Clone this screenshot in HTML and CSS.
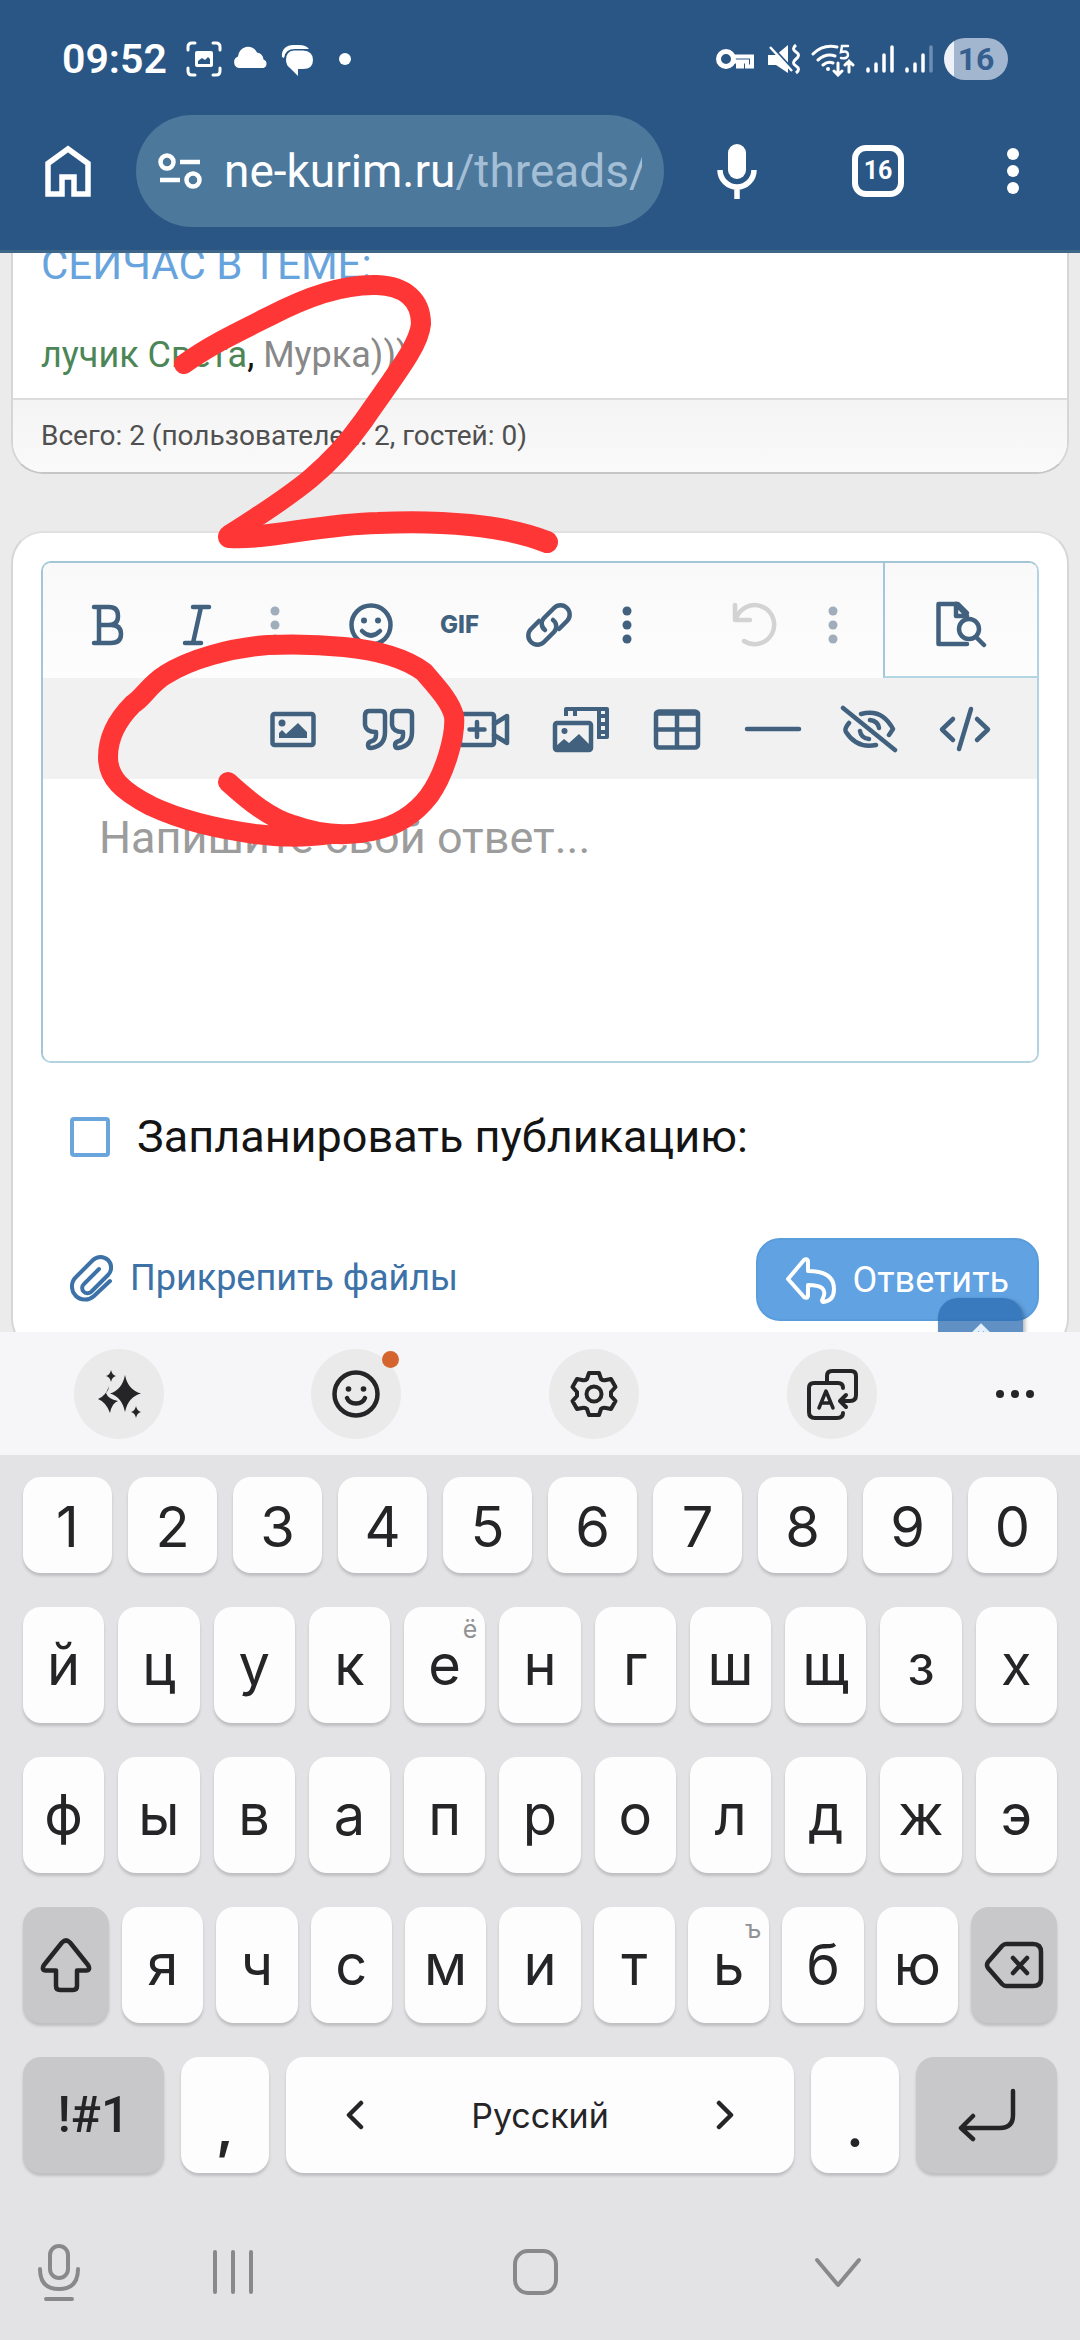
FILE: index.html
```html
<!DOCTYPE html>
<html lang="ru">
<head>
<meta charset="utf-8">
<meta name="viewport" content="width=device-width, initial-scale=1">
<title>ne-kurim.ru</title>
<link rel="stylesheet" href="styles.css">
</head>
<body>
<div class="screen">
  <header class="browser">
    <div class="status">
      <div class="status-left">
        <time class="clock">09:52</time>
        <svg width="36" height="36" viewBox="0 0 36 36" fill="none" stroke="#fff" stroke-width="3" stroke-linecap="round"><path d="M2 9V6q0-4 4-4h3M27 2h3q4 0 4 4v3M34 27v3q0 4-4 4h-3M9 34H6q-4 0-4-4v-3"/><rect x="9" y="10" width="18" height="16" rx="2" fill="#fff" stroke="none"/><path d="M12 23v-3l4-3 3 2 3-3 2 2v5z" fill="#295685" stroke="none"/></svg>
        <svg width="36" height="36" viewBox="0 0 36 36" fill="#fff"><path d="M6 27a6 6 0 0 1-1-11.500a10 10 0 0 1 19-4a8 8 0 0 1 6.500 7a4.500 4.500 0 0 1 0 8.500z"/></svg>
        <svg width="36" height="36" viewBox="0 0 36 36" fill="#fff"><path d="M2 16C1 8 7 4 13 4h6q7 0 10 4H15Q5 8 4 17z"/><path d="M14 9.500h9q10 .5 10 9.500t-10 9h-5v7l-8-8q-4-3-4-8 0-9 8-9.500z"/></svg>
        <svg width="36" height="36" viewBox="0 0 36 36" fill="#fff"><circle cx="18" cy="18" r="6"/></svg>
      </div>
      <div class="status-right">
        <svg width="41" height="36" viewBox="0 0 41 36" fill="none" stroke="#fff"><circle cx="10" cy="18" r="7.500" stroke-width="5"/><path d="M18 15.500h18v10h-5v-5h-5v5h-4v-5h-4" stroke-width="4"/></svg>
        <svg width="32" height="36" viewBox="0 0 32 36"><path d="M0 14h8l12-10v28L8 24H0z" fill="#fff"/><path d="M0 2l24 26" stroke="#295685" stroke-width="3"/><path d="M2 6l22 24" stroke="#fff" stroke-width="2.500"/><path d="M28 4q-5 4 0 7t0 7 0 7 0 7" fill="none" stroke="#fff" stroke-width="3"/></svg>
        <svg width="44" height="36" viewBox="0 0 44 36" fill="none" stroke="#fff" stroke-width="3" stroke-linecap="round"><path d="M2 13Q12 3 26 6M7 19q8-7 17-4M12 24q5-4 10-2"/><circle cx="17" cy="28" r="2" fill="#fff" stroke="none"/><path d="M37 5h-6l-1 6q7-2 7 3 0 4-7 3" stroke-width="2.500"/><path d="M27 22v11M23 30l4 4 4-4M38 31V20M34 24l4-4 4 4" stroke-width="3"/></svg>
        <svg width="28" height="36" viewBox="0 0 28 36" stroke="#fff" stroke-width="3.500" stroke-linecap="round"><path d="M2 28v2M10 23v7M18 14v16M26 6v24"/></svg>
        <svg width="28" height="36" viewBox="0 0 28 36" stroke="#fff" stroke-width="3.500" stroke-linecap="round"><path d="M2 28v2M10 23v7M18 14v16"/><path d="M26 6v24" stroke="#6d8fb3"/></svg>
        <span class="battery">16</span>
      </div>
    </div>
    <div class="toolbar">
      <button class="tool home" aria-label="Домой"><svg width="46" height="52" viewBox="0 0 46 52" fill="none" stroke="#fff" stroke-width="5.500"><path d="M3 49V18.500L23 4l20 14.500V49H29V32H17v17z"/></svg></button>
      <button class="omnibox"><svg width="44" height="36" viewBox="0 0 44 36" fill="none" stroke="#fff" stroke-width="4.500"><circle cx="9" cy="9" r="6.500"/><path d="M22 9h20M2 27h20"/><circle cx="35" cy="27" r="6.500"/></svg><span class="url">ne-kurim.ru<span class="path">/threads/</span></span></button>
      <button class="tool mic" aria-label="Голосовой поиск"><svg width="40" height="56" viewBox="0 0 40 56"><rect x="11" y="1" width="18" height="35" rx="9" fill="#fff"/><path d="M3 27a17 17 0 0 0 34 0M20 44v12" fill="none" stroke="#fff" stroke-width="5.500"/></svg></button>
      <button class="tool tabs" aria-label="Вкладки"><span>16</span></button>
      <button class="tool menu" aria-label="Меню"><svg width="12" height="48" viewBox="0 0 12 48" fill="#fff"><circle cx="6" cy="7" r="6"/><circle cx="6" cy="24" r="6"/><circle cx="6" cy="41" r="6"/></svg></button>
    </div>
  </header>

  <main class="page">
    <section class="card online">
      <h2>СЕЙЧАС В ТЕМЕ:</h2>
      <p class="names"><a class="green" href="#">лучик Света</a>, <a class="gray" href="#">Мурка)))</a></p>
      <p class="total">Всего: 2 (пользователей: 2, гостей: 0)</p>
    </section>

    <form class="card reply">
      <div class="editor">
        <div class="row-main">
          <div class="tools">
            <div class="group">
              <button type="button" class="ed" aria-label="Жирный"><svg width="48" height="48" viewBox="0 0 48 48"><path d="M10 6h15q9 0 9 9t-9 9H15M10 42h17q10 0 10-9t-10-9M15 6v36" /></svg></button>
              <button type="button" class="ed" aria-label="Курсив"><svg width="48" height="48" viewBox="0 0 48 48"><path d="M20 6h16M12 42h16M28 6l-8 36"/></svg></button>
              <button type="button" class="dots pale" aria-label="Ещё"><svg width="12" height="48" viewBox="0 0 12 48"><circle cx="6" cy="10" r="4.500"/><circle cx="6" cy="24" r="4.500"/><circle cx="6" cy="38" r="4.500"/></svg></button>
            </div>
            <div class="group">
              <button type="button" class="ed" aria-label="Смайлы"><svg width="48" height="48" viewBox="0 0 48 48"><circle cx="24" cy="24" r="19.500"/><circle cx="17" cy="19.500" r="3" class="fill"/><circle cx="31" cy="19.500" r="3" class="fill"/><path d="M15 30q9 9 18 0"/></svg></button>
              <button type="button" class="ed gif">GIF</button>
              <button type="button" class="ed" aria-label="Ссылка"><svg width="48" height="48" viewBox="0 0 48 48"><path d="M20 29a8 8 0 0 1-1-12l10-10a9 9 0 0 1 13 13l-8 8"/><path d="M28 19a8 8 0 0 1 1 12L19 41A9 9 0 0 1 6 28l8-8"/></svg></button>
              <button type="button" class="dots" aria-label="Ещё"><svg width="12" height="48" viewBox="0 0 12 48"><circle cx="6" cy="10" r="4.500"/><circle cx="6" cy="24" r="4.500"/><circle cx="6" cy="38" r="4.500"/></svg></button>
            </div>
            <div class="group undo-group">
              <button type="button" class="ed off" aria-label="Отменить"><svg width="48" height="48" viewBox="0 0 48 48"><path d="M4 4v15h15M5 18A19.500 19.500 0 1 1 13 40"/></svg></button>
              <button type="button" class="dots pale" aria-label="Ещё"><svg width="12" height="48" viewBox="0 0 12 48"><circle cx="6" cy="10" r="4.500"/><circle cx="6" cy="24" r="4.500"/><circle cx="6" cy="38" r="4.500"/></svg></button>
            </div>
          </div>
          <button type="button" class="preview" aria-label="Предпросмотр"><svg width="56" height="48" viewBox="0 0 56 48"><path d="M34 44H5.500V4H25l9 9"/><path d="M23 4v12h11z"/><circle cx="36" cy="29" r="10"/><path d="M43 37l8 8"/></svg></button>
        </div>
        <div class="row-more">
          <button type="button" class="ed2" aria-label="Изображение"><svg width="56" height="48" viewBox="0 0 56 48"><rect x="7.500" y="9" width="41" height="31" rx="2"/><circle cx="17" cy="18" r="3.500" class="fill"/><path class="fill" d="M14 33v-5l3-3 4 4 12-11 9 9v6z"/></svg></button>
          <button type="button" class="ed2" aria-label="Цитата"><svg width="56" height="48" viewBox="0 0 56 48"><path d="M8 6h12q4 0 4 4v17q0 14-14 16-3 0-3-3t4-4q4-1 4-6v-3q-10 0-11-7v-9q0-5 4-5z"/><path d="M35 6h12q4 0 4 4v17q0 14-14 16-3 0-3-3t4-4q4-1 4-6v-3q-10 0-11-7v-9q0-5 4-5z"/></svg></button>
          <button type="button" class="ed2" aria-label="Видео"><svg width="56" height="48" viewBox="0 0 56 48"><rect x="3" y="9" width="34" height="31" rx="2"/><path d="M37 19l13-8v27l-13-8M20 17v15M12.500 24.500h15"/></svg></button>
          <button type="button" class="ed2" aria-label="Медиа"><svg width="58" height="48" viewBox="0 0 58 48"><path class="fill" d="M12 11V4q0-2 2-2h41q2 0 2 2v28q0 2-2 2H45V6H25v5h-4V6h-5v5zM49 6v3h4V6zm0 7v4h4v-4zm0 8v4h4v-4zm0 8v2h4v-2z" fill-rule="evenodd"/><rect x="3" y="18" width="36" height="27" rx="2"/><circle cx="12.500" cy="26" r="3" class="fill"/><path class="fill" d="M3 42l9-8 5 4 10-9 12 12v4H3z"/></svg></button>
          <button type="button" class="ed2" aria-label="Таблица"><svg width="56" height="48" viewBox="0 0 56 48"><rect x="7" y="6.500" width="42" height="36" rx="3"/><path d="M7 8.500h42M7 24.500h42M28 8v34"/></svg></button>
          <button type="button" class="ed2" aria-label="Линия"><svg width="58" height="48" viewBox="0 0 58 48"><path d="M3 24h52"/></svg></button>
          <button type="button" class="ed2" aria-label="Скрытый текст"><svg width="58" height="48" viewBox="0 0 58 48"><path d="M3 3l52 42M21 9q21-6 32 15l-4 6M9 18q-5 6-3 9 11 17 30 13M30 15q8 1 9 8M20 26q1 7 9 8"/></svg></button>
          <button type="button" class="ed2" aria-label="Код"><svg width="56" height="48" viewBox="0 0 56 48"><path d="M16 14L5 24.500 16 35M40 14l11 10.500L40 35M34 4L22 44"/></svg></button>
        </div>
        <textarea aria-label="Ответ" placeholder="Напишите свой ответ..."></textarea>
      </div>
      <label class="schedule"><input type="checkbox">Запланировать публикацию:</label>
      <div class="actions">
        <a class="attach" href="#"><svg width="44" height="48" viewBox="0 0 44 48" fill="none" stroke="#3c72a8" stroke-width="4" stroke-linecap="round"><path d="M29 15L14 30a5 5 0 0 0 7 8L38 21A10.500 10.500 0 0 0 23 6L6 23a13 13 0 0 0 18 19L40 27"/></svg>Прикрепить файлы</a>
        <button type="button" class="submit"><svg width="50" height="48" viewBox="0 0 50 48" fill="none" stroke="#fff" stroke-width="4" stroke-linejoin="round"><path d="M2 23L18 4q3-2 4 1v10q26 0 26 18 0 12-11 13-2-1 0-4 6-13-15-13v11q-1 3-4 1z"/></svg>Ответить</button>
      </div>
    </form>

    <button class="to-top" aria-label="Наверх"><svg width="30" height="36" viewBox="0 0 30 36" fill="none" stroke="#e3effa" stroke-width="4"><path d="M15 3v33M3 15L15 3l12 12"/></svg></button>

    <svg class="marker" width="600" height="640" viewBox="0 253 600 640" fill="none" stroke="#ff3636" stroke-width="20" stroke-linecap="round" stroke-linejoin="round">
      <path d="M184 364C210 345 240 331 270 316C310 295 345 284 377 285C405 286 421 300 421 324C419 346 395 375 364 420C330 468 300 490 229 535"/>
      <path d="M229 537C265 540 320 524 378 523C440 520 505 525 547 542" stroke-width="22"/>
      <path d="M228 782C250 802 270 818 293 825C320 835 345 837 372 831C398 826 416 813 429 796C445 774 456 735 454 716C450 700 434 684 424 672C405 658 376 650 344 647C315 644 290 644 268 645C230 648 190 659 165 675C150 684 143 698 133 704C117 720 108 738 108 757C108 778 122 791 151 806C185 822 220 829 255 834C280 837 300 838 330 834"/>
    </svg>
  </main>

  <section class="keyboard" aria-label="Клавиатура">
    <div class="kb-tools">
      <button class="round" aria-label="Помощник"><svg width="48" height="52" viewBox="0 0 48 52" fill="#252527"><path d="M30 7q3 15 16 18.500Q33 29 30 44 27 29 15 25.500 27 22 30 7z"/><path d="M14 18q-3 10-11 13 8 3 12 14 2-10 8-12-10-2-12-8 3-3 3-7z"/><path d="M16 2q1 5 5 6-4 1-5 6-1-5-5-6 4-1 5-6zM41 38q1 5 5 6-4 1-5 6-1-5-5-6 4-1 5-6z"/></svg></button>
      <button class="round badge" aria-label="Эмодзи"><svg width="52" height="52" viewBox="0 0 52 52" fill="none" stroke="#252527" stroke-width="4.500" stroke-linecap="round"><circle cx="26" cy="26" r="21.500"/><circle cx="18.500" cy="21" r="2.800" fill="#252527" stroke="none"/><circle cx="33.500" cy="21" r="2.800" fill="#252527" stroke="none"/><path d="M17 30a9.500 8 0 0 0 18 0"/></svg></button>
      <button class="round" aria-label="Настройки"><svg width="52" height="52" viewBox="0 0 52 52" fill="none" stroke="#252527" stroke-width="4" stroke-linejoin="round"><path d="M21 5h10l2 6q2 2 5 1l5-1 4.500 8-4.500 5v4l4.500 5-4.500 8-5-1q-3-1-5 1l-2 6H21l-2-6q-2-2-5-1l-5 1L4.500 33 9 28v-4l-4.500-5L9 11l5 1q3 1 5-1z"/><circle cx="26" cy="26" r="7.500"/></svg></button>
      <button class="round" aria-label="Перевод"><svg width="54" height="54" viewBox="0 0 54 54" fill="none" stroke="#252527" stroke-width="4" stroke-linecap="round" stroke-linejoin="round"><path d="M22 15V9q0-5 5-5h19q5 0 5 5v19q0 6-6 6H36M41 28l-6 6 6 6M38 21q0-5-5-5H9q-5 0-5 5v24q0 6 6 6h22q6 0 6-5"/><path d="M14 41l7-17 7 17M16 36h10" stroke-width="3.500"/></svg></button>
      <button class="more" aria-label="Ещё"><svg width="40" height="12" viewBox="0 0 40 12" fill="#252527"><circle cx="5" cy="6" r="4"/><circle cx="20" cy="6" r="4"/><circle cx="35" cy="6" r="4"/></svg></button>
    </div>
    <div class="keys">
      <div class="krow digits">
        <button>1</button><button>2</button><button>3</button><button>4</button><button>5</button><button>6</button><button>7</button><button>8</button><button>9</button><button>0</button>
      </div>
      <div class="krow">
        <button>й</button><button>ц</button><button>у</button><button>к</button><button>е<small>ё</small></button><button>н</button><button>г</button><button>ш</button><button>щ</button><button>з</button><button>х</button>
      </div>
      <div class="krow">
        <button>ф</button><button>ы</button><button>в</button><button>а</button><button>п</button><button>р</button><button>о</button><button>л</button><button>д</button><button>ж</button><button>э</button>
      </div>
      <div class="krow shift-row">
        <button class="dark" aria-label="Shift"><svg width="52" height="56" viewBox="0 0 52 56"><path d="M22 5.500q4-4 8 0L48 28q3 5-2 5.500h-9V49q0 4-4 4H20q-4 0-4-4V33.500H6q-5-.5-2-5.500z"/></svg></button><button>я</button><button>ч</button><button>с</button><button>м</button><button>и</button><button>т</button><button>ь<small>ъ</small></button><button>б</button><button>ю</button><button class="dark" aria-label="Удалить"><svg width="60" height="50" viewBox="0 0 60 50"><path d="M22 4h27q8 0 8 8v27q0 7-8 7H22q-2 0-4-2L4 28q-2-3 0-6L18 6q2-2 4-2zM29 18l14 15M43 18L29 33"/></svg></button>
      </div>
      <div class="krow bottom-row">
        <button class="dark sym">!#1</button><button class="punct">,</button><button class="space"><svg width="18" height="30" viewBox="0 0 18 30"><path d="M15 3L3 15l12 12"/></svg><span>Русский</span><svg width="18" height="30" viewBox="0 0 18 30"><path d="M3 3l12 12L3 27"/></svg></button><button class="punct">.</button><button class="dark" aria-label="Ввод"><svg width="58" height="54" viewBox="0 0 58 54"><path d="M55 3v24q0 13-13 13H3M15 28L3 40l12 11"/></svg></button>
      </div>
    </div>
    <nav class="sysnav">
      <button aria-label="Диктовка"><svg width="44" height="60" viewBox="0 0 44 60"><rect x="13" y="4" width="18" height="32" rx="9"/><path d="M3 27q0 20 19 20t19-20M9 57h26"/></svg></button>
      <button aria-label="Недавние"><svg width="44" height="60" viewBox="0 0 44 60"><path d="M4 10v40M22 10v40M40 10v40"/></svg></button>
      <button aria-label="Главный экран"><svg width="48" height="60" viewBox="0 0 48 60"><rect x="4" y="9" width="41" height="42" rx="13"/></svg></button>
      <button aria-label="Скрыть клавиатуру"><svg width="48" height="60" viewBox="0 0 48 60"><path d="M3 18l21 25 21-25"/></svg></button>
    </nav>
  </section>
</div>
</body>
</html>
```

FILE: styles.css
```css
* { box-sizing: border-box; }
body { margin: 0; font-family: Roboto, "Noto Sans", sans-serif; color: #141414; background: #ebebeb; }
button { border: 0; padding: 0; margin: 0; background: none; font: inherit; color: inherit; display: flex; align-items: center; justify-content: center; }
a { text-decoration: none; }
h2, p { margin: 0; font-weight: 400; }
svg { display: block; flex: none; }

.screen { display: flex; flex-direction: column; height: 100vh; overflow: hidden; }

/* Browser chrome */
.browser { flex: none; background: #295685; color: #fff; padding-bottom: 23px; border-bottom: 3px solid #3d6689; }
.status { display: flex; justify-content: space-between; padding: 36px 72px 33px 62px; }
.status-left, .status-right { display: flex; align-items: center; gap: 11px; height: 46px; }
.clock { font-size: 41px; line-height: 46px; font-weight: 600; margin-right: 8px; }
.battery { width: 64px; height: 42px; border-radius: 21px; background: linear-gradient(90deg, #eef1f7 10px, #a3b6cf 10px); color: #345f8f; font-size: 32px; line-height: 42px; font-weight: 700; text-align: center; }
.toolbar { display: flex; align-items: center; }
.tool { flex: none; height: 112px; }
.home, .tabs { width: 136px; }
.mic { width: 146px; }
.menu { width: 134px; }
.omnibox { flex: 1; min-width: 0; height: 112px; border-radius: 56px; background: #4c789c; justify-content: flex-start; gap: 22px; padding: 0 22px; }
.url { flex: 1; min-width: 0; overflow: hidden; white-space: nowrap; text-align: left; font-size: 46px; line-height: 64px; }
.path { color: #a3bed5; }
.tabs span { width: 52px; height: 52px; border: 6px solid #fff; border-radius: 14px; font-size: 25px; line-height: 40px; font-weight: 700; }

/* Forum page */
.page { flex: 1; min-height: 0; position: relative; overflow: hidden; background: #ebebeb; }
.card { margin: 0 11px; background: #fff; border: 2px solid #d6d6d6; border-bottom-color: #c6c6c6; border-radius: 32px; }
.online { margin-top: -59px; padding-top: 41px; overflow: hidden; }
.online h2 { padding: 0 28px; font-size: 42px; line-height: 56px; color: #67a3dc; }
.names { padding: 38px 28px 19px; font-size: 36px; line-height: 48px; }
.green { color: #4c8657; }
.gray { color: #888; }
.total { padding: 16px 28px; border-top: 2px solid #dcdcdc; background: linear-gradient(#f4f4f4, #fafafa); font-size: 28px; line-height: 40px; color: #505050; }
.reply { margin-top: 57px; padding: 28px; border-top-color: #e0e0e0; }

.editor { border: 2px solid #b3d2e2; border-top-color: #a3c5d5; border-left-color: #a3c5d9; border-radius: 10px; overflow: hidden; }
.editor svg { fill: none; stroke: #41617f; stroke-width: 4.500; stroke-linecap: round; stroke-linejoin: round; }
.editor .fill, .dots circle { fill: #41617f; stroke: none; }
.row-main { display: flex; height: 115px; background: linear-gradient(#f9f9f9, #fdfdfd); }
.tools { flex: 1; display: flex; align-items: center; gap: 18px; padding: 8px 17px 0 20px; }
.group { display: flex; }
.undo-group { margin-left: auto; }
.ed { width: 89px; height: 64px; }
.gif { font-family: Inter, sans-serif; font-size: 24px; font-weight: 800; color: #41617f; }
.dots { width: 67px; height: 64px; }
.dots.pale circle { fill: #a0adba; }
.editor .off svg { stroke: #d3d3d3; }
.preview { width: 154px; padding-top: 8px; border-left: 2px solid #a3c8da; border-bottom: 2px solid #b3d6e4; }
.row-more { display: flex; justify-content: flex-end; align-items: center; height: 101px; padding-right: 24px; background: #f1f1f1; }
.ed2 { width: 96px; height: 96px; }
textarea { display: block; width: 100%; height: 282px; padding: 29px 56px; border: 0; outline: 0; resize: none; background: #fff; font: 45px/60px Roboto, "Noto Sans", sans-serif; }
textarea::placeholder { color: #9c9c9c; opacity: 1; }

.schedule { display: flex; align-items: center; gap: 27px; margin-top: 42px; padding-left: 29px; font-size: 45px; line-height: 64px; }
.schedule input { appearance: none; margin: 0; width: 40px; height: 40px; border: 4px solid #6aa5dc; border-radius: 4px; background: #fff; }
.actions { display: flex; align-items: center; justify-content: space-between; margin-top: 69px; padding-left: 29px; }
.attach { display: flex; align-items: center; gap: 16px; padding-bottom: 4px; font-size: 36px; line-height: 48px; color: #3c72a8; }
.submit { gap: 16px; height: 83px; padding: 0 28px; border-radius: 24px; background: #60a2e2; border: 2px solid #5a9ddb; color: #fff; font-size: 36px; }
.to-top { position: absolute; right: 57px; bottom: -51px; width: 85px; height: 85px; border-radius: 20px; background: rgba(44, 107, 176, .75); box-shadow: 2px 2px 4px rgba(0, 0, 0, .3); }
.marker { position: absolute; left: 0; top: 0; pointer-events: none; }

/* Keyboard */
.keyboard { flex: none; background: #e3e3e5; color: #252527; font-family: Inter, "Noto Sans", sans-serif; }
.kb-tools { display: grid; grid-template-columns: 22fr 22fr 22fr 22fr 12fr; justify-items: center; align-items: center; height: 123px; background: #f6f6f8; }
.round { width: 90px; height: 90px; border-radius: 45px; background: #eaeaeb; }
.badge { position: relative; }
.badge::after { content: ""; position: absolute; right: 2px; top: 2px; width: 17px; height: 17px; border-radius: 9px; background: #d5652f; }
.keys { display: grid; gap: 34px; padding: 22px 23px 0; }
.krow { display: flex; gap: 14px; }
.krow button { flex: 1 1 0; min-width: 0; position: relative; height: 116px; border-radius: 18px; background: #fdfdfe; box-shadow: 0 3px 3px rgba(0, 0, 0, .16); font-size: 56px; }
.krow svg { fill: none; stroke: #252527; stroke-width: 4.500; stroke-linecap: round; stroke-linejoin: round; }
.krow .dark { background: #c8c8ca; }
.krow small { position: absolute; right: 8px; top: 6px; font-size: 25px; line-height: 32px; color: #929294; }
.krow.digits { gap: 16px; }
.digits button { height: 96px; padding-top: 4px; }
.krow.shift-row { gap: 13px; }
.shift-row .dark { flex: 0 0 86px; }
.krow.bottom-row { display: grid; grid-template-columns: 141fr 88fr 508fr 88fr 141fr; gap: 17px; }
.bottom-row .punct { padding-top: 24px; font-weight: 600; }
.bottom-row .space { justify-content: space-between; padding: 0 60px; font-size: 34px; }
.bottom-row .sym { font-family: Roboto, sans-serif; font-size: 50px; font-weight: 500; }
.sysnav { display: grid; grid-template-columns: 118fr 230fr 373fr 233fr 126fr; justify-items: center; padding: 69px 0 38px; }
.sysnav svg { fill: none; stroke: #89898b; stroke-width: 4; stroke-linecap: round; stroke-linejoin: round; }
```
